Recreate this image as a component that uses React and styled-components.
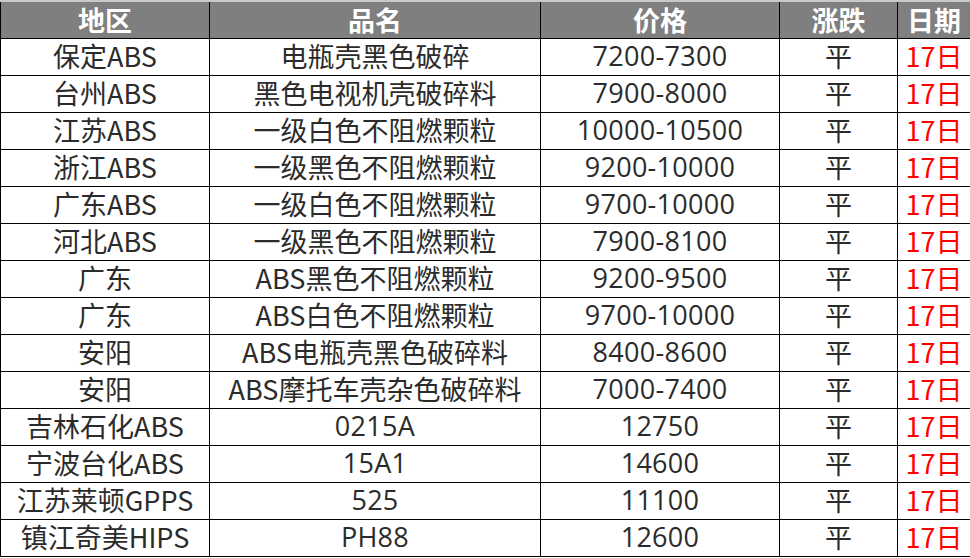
import React from "react";
import styled, { createGlobalStyle } from "styled-components";

const GlobalStyle = createGlobalStyle`
  body {
    margin: 0;
    background: #ffffff;
    font-family: "Noto Sans CJK SC", "Noto Sans", sans-serif;
  }
`;

const Table = styled.table`
  width: 970px;
  border-collapse: collapse;
  table-layout: fixed;
  font-size: 27px;
`;

const HeadCell = styled.th`
  height: 36px;
  padding: 0;
  background: #7f7f7f;
  color: #ffffff;
  font-weight: 700;
  line-height: 36px;
  text-align: center;
  border-top: 2px solid #c8c8c8;
  border-left: 1px solid #000;
  border-right: 1px solid #000;
  border-bottom: 1px solid #000;
  white-space: nowrap;
`;

const Cell = styled.td`
  height: 34px;
  padding: 0 0 2px;
  line-height: 34px;
  text-align: center;
  color: ${(p) => (p.$red ? "#ff0000" : "#2b2b2b")};
  font-family: ${(p) =>
    p.$num
      ? `"Open Sans", "Noto Sans CJK SC", sans-serif`
      : `"Noto Sans CJK SC", "Noto Sans", sans-serif`};
  letter-spacing: ${(p) => (p.$num ? "0.3px" : "0")};
  border: 1px solid #000;
  white-space: nowrap;
`;

const widths = [209, 331, 239, 118, 73];
const headers = ["地区", "品名", "价格", "涨跌", "日期"];

const rows = [
  ["保定ABS", "电瓶壳黑色破碎", "7200-7300"],
  ["台州ABS", "黑色电视机壳破碎料", "7900-8000"],
  ["江苏ABS", "一级白色不阻燃颗粒", "10000-10500"],
  ["浙江ABS", "一级黑色不阻燃颗粒", "9200-10000"],
  ["广东ABS", "一级白色不阻燃颗粒", "9700-10000"],
  ["河北ABS", "一级黑色不阻燃颗粒", "7900-8100"],
  ["广东", "ABS黑色不阻燃颗粒", "9200-9500"],
  ["广东", "ABS白色不阻燃颗粒", "9700-10000"],
  ["安阳", "ABS电瓶壳黑色破碎料", "8400-8600"],
  ["安阳", "ABS摩托车壳杂色破碎料", "7000-7400"],
  ["吉林石化ABS", "0215A", "12750"],
  ["宁波台化ABS", "15A1", "14600"],
  ["江苏莱顿GPPS", "525", "11100"],
  ["镇江奇美HIPS", "PH88", "12600"],
];

const isCode = (s) => /^[0-9A-Z]+$/.test(s);

export default function App() {
  return (
    <>
      <GlobalStyle />
      <Table>
        <colgroup>
          {widths.map((w, i) => (
            <col key={i} style={{ width: w }} />
          ))}
        </colgroup>
        <thead>
          <tr>
            {headers.map((h) => (
              <HeadCell key={h}>{h}</HeadCell>
            ))}
          </tr>
        </thead>
        <tbody>
          {rows.map((r, i) => (
            <tr key={i}>
              <Cell>{r[0]}</Cell>
              <Cell $num={isCode(r[1])}>{r[1]}</Cell>
              <Cell $num>{r[2]}</Cell>
              <Cell>平</Cell>
              <Cell $red>17日</Cell>
            </tr>
          ))}
        </tbody>
      </Table>
    </>
  );
}
